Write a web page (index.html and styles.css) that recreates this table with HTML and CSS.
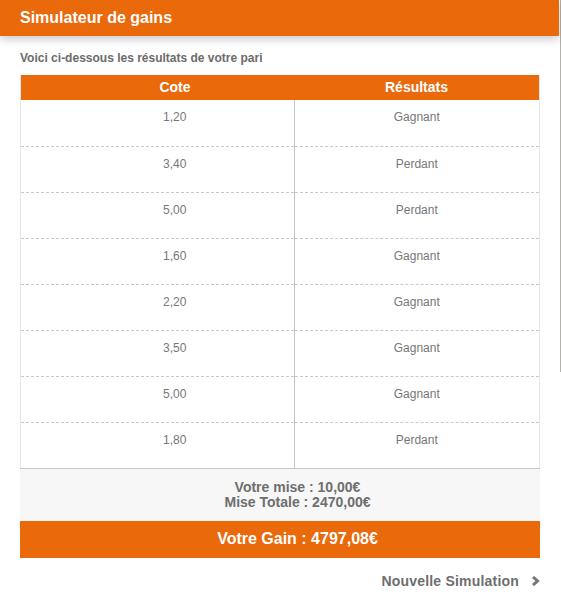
FILE: index.html
```html
<!DOCTYPE html>
<html lang="fr">
<head>
<meta charset="utf-8">
<title>Simulateur de gains</title>
<link rel="stylesheet" href="styles.css">
</head>
<body>
<div class="frame-line"></div>
<header class="topbar"><h1>Simulateur de gains</h1></header>
<main class="content">
  <p class="intro">Voici ci-dessous les résultats de votre pari</p>
  <table class="results">
    <thead>
      <tr><th class="c1">Cote</th><th class="c2">Résultats</th></tr>
    </thead>
    <tbody>
      <tr><td class="c1">1,20</td><td class="c2">Gagnant</td></tr>
      <tr><td class="c1">3,40</td><td class="c2">Perdant</td></tr>
      <tr><td class="c1">5,00</td><td class="c2">Perdant</td></tr>
      <tr><td class="c1">1,60</td><td class="c2">Gagnant</td></tr>
      <tr><td class="c1">2,20</td><td class="c2">Gagnant</td></tr>
      <tr><td class="c1">3,50</td><td class="c2">Gagnant</td></tr>
      <tr><td class="c1">5,00</td><td class="c2">Gagnant</td></tr>
      <tr class="last"><td class="c1">1,80</td><td class="c2">Perdant</td></tr>
    </tbody>
  </table>
  <div class="summary">
    <div>Votre mise : 10,00€</div>
    <div>Mise Totale : 2470,00€</div>
  </div>
  <div class="gain">Votre Gain : 4797,08€</div>
  <div class="actions">
    <a class="next" href="#">Nouvelle Simulation
      <svg class="chev" width="9" height="10" viewBox="0 0 9 10"><path d="M2 1 L6.5 5 L2 9" fill="none" stroke="#777" stroke-width="3"/></svg>
    </a>
  </div>
</main>
</body>
</html>
```
FILE: styles.css
```css
html, body {
  margin: 0;
  padding: 0;
  background: #fff;
}
body {
  font-family: "Liberation Sans", Arial, sans-serif;
  width: 561px;
  position: relative;
}
.frame-line {
  position: absolute;
  left: 560px;
  top: 0;
  width: 1px;
  height: 372px;
  background: #b3b3ab;
}
.topbar {
  width: 559px;
  height: 36px;
  background: #e9690b;
  box-shadow: 0 3px 9px rgba(0, 0, 0, 0.22);
  position: relative;
  z-index: 1;
}
.topbar h1 {
  margin: 0;
  padding: 0 0 0 20px;
  font-size: 16px;
  line-height: 36px;
  font-weight: bold;
  color: #fff;
}
.content {
  padding: 0 21px 0 20px;
}
.intro {
  margin: 0;
  padding-top: 15px;
  height: 24px;
  font-size: 12px;
  line-height: 14px;
  font-weight: bold;
  color: #6b6b6b;
}
.results {
  width: 520px;
  border-collapse: collapse;
  table-layout: fixed;
  border-left: 1px solid #e4e4e4;
  border-right: 1px solid #e4e4e4;
}
.results .c1 {
  width: 238px;
  padding-left: 35px;
  padding-right: 0;
}
.results th {
  background: #e9690b;
  color: #fff;
  font-size: 14px;
  font-weight: bold;
  height: 25px;
  padding-top: 0;
  padding-bottom: 0;
  line-height: 25px;
  text-align: center;
}
.results th.c2 { padding: 0; }
.results td {
  height: 46px;
  padding-top: 10px;
  padding-bottom: 0;
  box-sizing: border-box;
  vertical-align: top;
  text-align: center;
  font-size: 12px;
  line-height: 14px;
  color: #777;
  border-bottom: 1px dashed #c8c8c8;
}
.results td.c2 { padding-left: 0; padding-right: 0; }
.results td.c1 {
  border-right: 1px solid #c4c4c4;
}
.results tr.last td {
  border-bottom: 1px solid #c8c8c8;
}
.summary {
  background: #f7f7f7;
  padding: 11px 0 11px 35px;
  text-align: center;
  font-size: 14px;
  line-height: 15px;
  font-weight: bold;
  color: #6e6e6e;
  width: 485px;
}
.gain {
  width: 485px;
  padding-left: 35px;
  height: 37px;
  background: #e9690b;
  color: #fff;
  text-align: center;
  font-size: 16px;
  font-weight: bold;
  line-height: 35px;
}
.actions {
  width: 520px;
  display: flex;
  justify-content: flex-end;
  padding-top: 15px;
}
.next {
  display: flex;
  align-items: center;
  gap: 12px;
  text-decoration: none;
  font-size: 14px;
  letter-spacing: 0.2px;
  font-weight: bold;
  color: #6e6e6e;
  line-height: 16px;
}
.chev {
  display: block;
  margin-right: 0;
}
```
